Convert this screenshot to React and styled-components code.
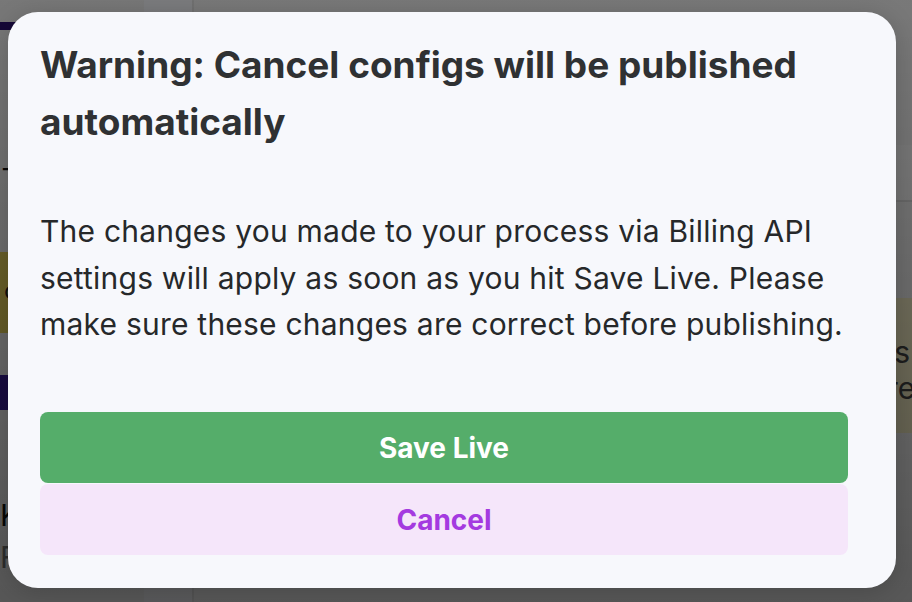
import React from "react";
import styled, { createGlobalStyle } from "styled-components";

const GlobalStyle = createGlobalStyle`
  html, body {
    margin: 0;
    padding: 0;
    width: 912px;
    height: 602px;
    overflow: hidden;
    font-family: Inter, "Noto Sans", sans-serif;
  }
`;

const Page = styled.div`
  position: relative;
  width: 912px;
  height: 602px;
  display: flex;
  background: #f2f2f2;
  overflow: hidden;
`;

const Sidebar = styled.aside`
  width: 144px;
  flex: none;
  display: flex;
  flex-direction: column;
  padding-top: 22px;
  background: #f0f0f0;
`;

const SideBrand = styled.div`
  height: 8px;
  width: 60px;
  background: #2a1070;
`;

const SidePlus = styled.div`
  margin-top: 122px;
  font-size: 30px;
  line-height: 30px;
  color: #111;
`;

const SideNotice = styled.div`
  margin-top: 70px;
  height: 81px;
  background: #e6d25a;
  color: #222;
  font-size: 24px;
  padding: 24px 4px;
  box-sizing: border-box;
`;

const SideButton = styled.div`
  margin-top: 42px;
  height: 35px;
  background: #3a1c9a;
`;

const SideLabel = styled.div`
  margin-top: ${(p) => p.$gap}px;
  font-size: 30px;
  line-height: 34px;
  color: ${(p) => (p.$muted ? "#777" : "#111")};
`;

const Rail = styled.div`
  width: 48px;
  flex: none;
  background: #f6f7fb;
  border-right: 2px solid #e2e2e2;
`;

const Main = styled.main`
  flex: 1;
  display: flex;
  flex-direction: column;
  padding-top: 145px;
`;

const HeaderBand = styled.div`
  height: 55px;
  background: #f8f8f8;
  border-bottom: 2px solid #dcdcdc;
`;

const Banner = styled.div`
  margin-top: 96px;
  margin-left: auto;
  width: 120px;
  height: 135px;
  background: #f6efc6;
  color: #444;
  font-size: 30px;
  line-height: 36px;
  padding: 36px 0 0 95px;
  box-sizing: border-box;
  white-space: nowrap;
  overflow: hidden;
`;

const Overlay = styled.div`
  position: absolute;
  inset: 0;
  background: linear-gradient(
    to bottom,
    rgba(0, 0, 0, 0.5),
    rgba(0, 0, 0, 0.64)
  );
  display: flex;
  align-items: flex-start;
  padding: 12px 16px 0 8px;
`;

const Modal = styled.div`
  width: 888px;
  height: 576px;
  box-sizing: border-box;
  background: #f7f8fc;
  border-radius: 30px;
  padding: 24px 48px 33px 32px;
  display: flex;
  flex-direction: column;
  box-shadow: 0 4px 24px rgba(0, 0, 0, 0.18);
`;

const Title = styled.h2`
  margin: 0;
  font-size: 37px;
  line-height: 57px;
  font-weight: 700;
  color: #2f3133;
`;

const Body = styled.p`
  margin: 58px 0 0;
  font-size: 30px;
  line-height: 46.5px;
  font-weight: 400;
  letter-spacing: 0.22px;
  color: #26282a;
`;

const Actions = styled.div`
  margin-top: auto;
  display: flex;
  flex-direction: column;
  gap: 1px;
`;

const Button = styled.button`
  height: 71px;
  border: 0;
  border-radius: 8px;
  font-family: Inter, "Noto Sans", sans-serif;
  font-size: 28px;
  font-weight: 700;
  cursor: pointer;
  background: ${(p) => (p.$variant === "primary" ? "#55ad6a" : "#f5e6fa")};
  color: ${(p) => (p.$variant === "primary" ? "#ffffff" : "#a43ae0")};
`;

export default function App() {
  return (
    <>
      <GlobalStyle />
      <Page>
        <Sidebar>
          <SideBrand />
          <SidePlus>+</SidePlus>
          <SideNotice>c</SideNotice>
          <SideButton />
          <SideLabel $gap={88}>K</SideLabel>
          <SideLabel $gap={8} $muted>F</SideLabel>
        </Sidebar>
        <Rail />
        <Main>
          <HeaderBand />
          <Banner>
            is
            <br />
            re
          </Banner>
        </Main>
        <Overlay>
          <Modal role="dialog" aria-modal="true">
            <Title>Warning: Cancel configs will be published automatically</Title>
            <Body>
              The changes you made to your process via Billing API settings will
              apply as soon as you hit Save Live. Please make sure these changes
              are correct before publishing.
            </Body>
            <Actions>
              <Button $variant="primary">Save Live</Button>
              <Button $variant="secondary">Cancel</Button>
            </Actions>
          </Modal>
        </Overlay>
      </Page>
    </>
  );
}
